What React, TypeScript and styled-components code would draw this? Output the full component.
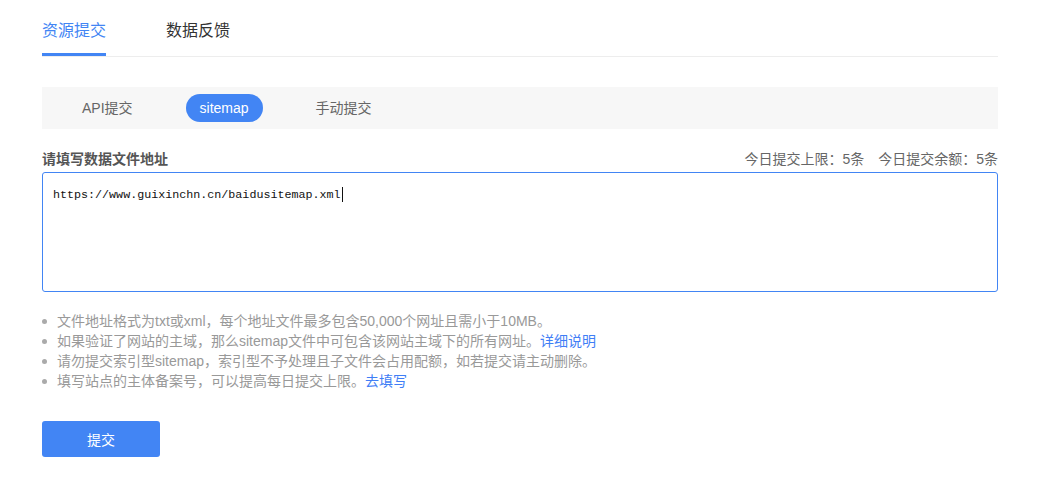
import React from "react";
import styled, { createGlobalStyle } from "styled-components";

const GlobalStyle = createGlobalStyle`
  html, body {
    margin: 0;
    padding: 0;
    background: #fff;
  }
  body {
    font-family: "Liberation Sans", Arial, "Noto Sans CJK SC", sans-serif;
    color: #333;
  }
`;

const BLUE = "#4285f4";

export default function App() {
    return (
        <>
            <GlobalStyle/>
            <Page>
                <TabBar>
                    <Tab $active>资源提交</Tab>
                    <Tab>数据反馈</Tab>
                </TabBar>
                <SubTabBar>
                    <SubTab>API提交</SubTab>
                    <SubTab $active>sitemap</SubTab>
                    <SubTab>手动提交</SubTab>
                </SubTabBar>
                <LabelRow>
                    <Label>请填写数据文件地址</Label>
                    <Quota>今日提交上限：5条　今日提交余额：5条</Quota>
                </LabelRow>
                <UrlBox>
                    <span>https://www.guixinchn.cn/baidusitemap.xml</span>
                    <Caret/>
                </UrlBox>
                <Notes>
                    <Note>文件地址格式为txt或xml，每个地址文件最多包含50,000个网址且需小于10MB。</Note>
                    <Note>如果验证了网站的主域，那么sitemap文件中可包含该网站主域下的所有网址。<Link>详细说明</Link></Note>
                    <Note>请勿提交索引型sitemap，索引型不予处理且子文件会占用配额，如若提交请主动删除。</Note>
                    <Note>填写站点的主体备案号，可以提高每日提交上限。<Link>去填写</Link></Note>
                </Notes>
                <SubmitButton>提交</SubmitButton>
            </Page>
        </>
    );
}

const Page = styled.div`
  width: 956px;
  padding: 19px 41px 0 42px;
`;

const TabBar = styled.div`
  display: flex;
  gap: 60px;
  border-bottom: 1px solid #ededed;
`;

const Tab = styled.div<{ $active?: boolean }>`
  font-size: 16px;
  line-height: 24px;
  padding-bottom: 10px;
  color: ${p => p.$active ? BLUE : "#333"};
  border-bottom: 3px solid ${p => p.$active ? BLUE : "transparent"};
`;

const SubTabBar = styled.div`
  display: flex;
  align-items: center;
  gap: 39px;
  height: 42px;
  margin-top: 30px;
  padding-left: 26px;
  background: #f7f7f7;
`;

const SubTab = styled.div<{ $active?: boolean }>`
  height: 28px;
  line-height: 28px;
  padding: 0 14px;
  border-radius: 14px;
  font-size: 14px;
  color: ${p => p.$active ? "#fff" : "#666"};
  background: ${p => p.$active ? BLUE : "transparent"};
`;

const LabelRow = styled.div`
  display: flex;
  justify-content: space-between;
  align-items: center;
  margin-top: 19px;
  height: 20px;
  margin-bottom: 4px;
`;

const Label = styled.div`
  font-size: 14px;
  font-weight: bold;
  color: #555;
`;

const Quota = styled.div`
  font-size: 14px;
  color: #666;
`;

const UrlBox = styled.div`
  box-sizing: border-box;
  height: 120px;
  border: 1px solid ${BLUE};
  border-radius: 3px;
  padding: 14px 10px;
  font-family: "Liberation Mono", "Courier New", monospace;
  font-size: 11.7px;
  line-height: 16px;
  color: #111;
  display: flex;
  align-items: flex-start;
`;

const Caret = styled.span`
  display: inline-block;
  width: 1px;
  height: 15px;
  margin-left: 1px;
  background: #111;
`;

const Notes = styled.ul`
  list-style: none;
  margin: 19px 0 0;
  padding: 0;
`;

const Note = styled.li`
  position: relative;
  padding-left: 15px;
  font-size: 14px;
  line-height: 20px;
  color: #999;

  &::before {
    content: "";
    position: absolute;
    left: 0;
    top: 8px;
    width: 5px;
    height: 5px;
    border-radius: 50%;
    background: #aaa;
  }
`;

const Link = styled.a`
  color: #3f7ef6;
  cursor: pointer;
`;

const SubmitButton = styled.button`
  display: block;
  width: 118px;
  height: 36px;
  margin-top: 30px;
  border: none;
  border-radius: 3px;
  background: ${BLUE};
  color: #fff;
  font-family: inherit;
  font-size: 14px;
  cursor: pointer;
`;
